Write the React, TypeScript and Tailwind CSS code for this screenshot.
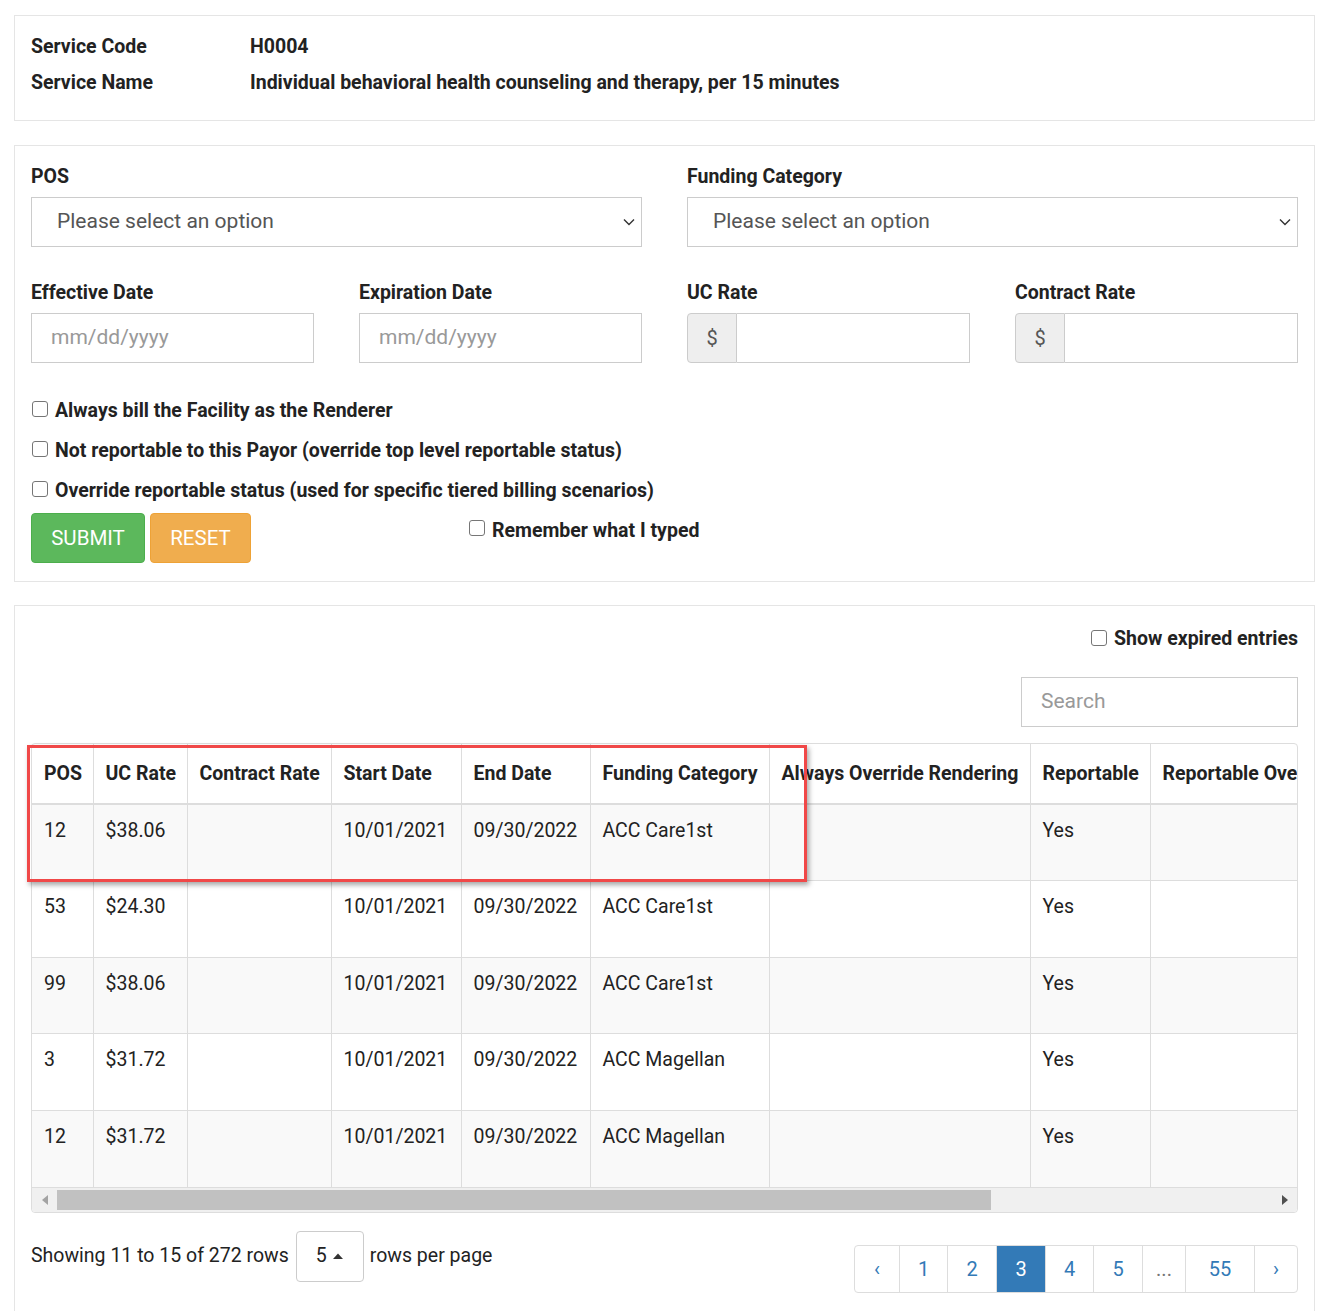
import React from "react";

const font = { fontFamily: "Roboto, 'Noto Sans', Arial, sans-serif" };

function Check({ className = "" }: { className?: string }) {
  return (
    <span
      className={
        "inline-block w-[16px] h-[16px] rounded-[3px] border border-[#767676] bg-white shrink-0 " +
        className
      }
    />
  );
}

function Chevron() {
  return (
    <svg width="14" height="10" viewBox="0 0 14 10" className="shrink-0">
      <polyline points="2,2.5 7,7.5 12,2.5" fill="none" stroke="#333" strokeWidth="1.4" />
    </svg>
  );
}

function Select() {
  return (
    <div className="h-[50px] border border-[#ccc] flex items-center pl-[25px] pr-[5px] justify-between bg-white">
      <span className="text-[21px] text-[#555]">Please select an option</span>
      <Chevron />
    </div>
  );
}

function DateInput() {
  return (
    <div className="h-[50px] border border-[#ccc] flex items-center pl-[19px] bg-white">
      <span className="text-[21px] text-[#999]">mm/dd/yyyy</span>
    </div>
  );
}

function MoneyInput() {
  return (
    <div className="h-[50px] flex">
      <div className="w-[50px] border border-[#ccc] bg-[#eee] rounded-l-[4px] flex items-center justify-center text-[20px] text-[#555]">
        $
      </div>
      <div className="flex-1 border border-l-0 border-[#ccc] bg-white" />
    </div>
  );
}

function Label({ children }: { children: React.ReactNode }) {
  return (
    <div className="text-[19.5px] font-bold leading-[22px] pt-[2px] mb-[9px] text-[#222]">{children}</div>
  );
}

const cols = [61, 94, 144, 130, 129, 179, 261, 120, 220];
const headers = [
  "POS",
  "UC Rate",
  "Contract Rate",
  "Start Date",
  "End Date",
  "Funding Category",
  "Always Override Rendering",
  "Reportable",
  "Reportable Override",
];
const rows = [
  ["12", "$38.06", "", "10/01/2021", "09/30/2022", "ACC Care1st", "", "Yes", ""],
  ["53", "$24.30", "", "10/01/2021", "09/30/2022", "ACC Care1st", "", "Yes", ""],
  ["99", "$38.06", "", "10/01/2021", "09/30/2022", "ACC Care1st", "", "Yes", ""],
  ["3", "$31.72", "", "10/01/2021", "09/30/2022", "ACC Magellan", "", "Yes", ""],
  ["12", "$31.72", "", "10/01/2021", "09/30/2022", "ACC Magellan", "", "Yes", ""],
];

export default function App() {
  return (
    <div className="w-[1335px] min-h-[1311px] bg-white text-[#222] px-[14px] pt-[15px]" style={font}>
      {/* Panel 1 */}
      <div className="w-[1301px] border border-[#e5e5e5] pl-[16px] pt-[13px] pb-[19px]">
        <div className="flex leading-[36px] text-[19.5px] font-bold">
          <div className="w-[219px]">Service Code</div>
          <div>H0004</div>
        </div>
        <div className="flex leading-[36px] text-[19.5px] font-bold">
          <div className="w-[219px]">Service Name</div>
          <div>Individual behavioral health counseling and therapy, per 15 minutes</div>
        </div>
      </div>

      {/* Panel 2 */}
      <div className="w-[1301px] border border-[#e5e5e5] mt-[24px] px-[16px] pt-[18px] pb-[18px]">
        <div className="grid grid-cols-2 gap-x-[45px]">
          <div>
            <Label>POS</Label>
            <Select />
          </div>
          <div>
            <Label>Funding Category</Label>
            <Select />
          </div>
        </div>
        <div className="grid grid-cols-4 gap-x-[45px] mt-[33px]">
          <div>
            <Label>Effective Date</Label>
            <DateInput />
          </div>
          <div>
            <Label>Expiration Date</Label>
            <DateInput />
          </div>
          <div>
            <Label>UC Rate</Label>
            <MoneyInput />
          </div>
          <div>
            <Label>Contract Rate</Label>
            <MoneyInput />
          </div>
        </div>
        <div className="mt-[28px] text-[19.5px] font-bold">
          {[
            "Always bill the Facility as the Renderer",
            "Not reportable to this Payor (override top level reportable status)",
            "Override reportable status (used for specific tiered billing scenarios)",
          ].map((t) => (
            <div key={t} className="flex items-start h-[40px] pl-[1px]">
              <Check className="mt-[10px] mr-[7px]" />
              <span className="leading-[40px]">{t}</span>
            </div>
          ))}
        </div>
        <div className="flex items-start mt-[2px]">
          <button className="h-[50px] w-[114px] rounded-[4px] bg-[#5cb85c] border border-[#4cae4c] text-white text-[20.5px]">
            SUBMIT
          </button>
          <button className="h-[50px] w-[101px] ml-[5px] rounded-[4px] bg-[#f0ad4e] border border-[#eea236] text-white text-[20.5px]">
            RESET
          </button>
          <div className="flex items-start ml-[218px] text-[19.5px] font-bold">
            <Check className="mt-[7px] mr-[7px]" />
            <span className="leading-[36px]">Remember what I typed</span>
          </div>
        </div>
      </div>

      {/* Panel 3 */}
      <div className="w-[1301px] border border-[#e5e5e5] border-b-0 mt-[23px] px-[16px] pt-[18px] pb-[40px]">
        <div className="flex justify-end items-start text-[19.5px] font-bold">
          <Check className="mt-[6px] mr-[7px]" />
          <span className="leading-[30px]">Show expired entries</span>
        </div>
        <div className="flex justify-end mt-[23px]">
          <div className="w-[277px] h-[50px] border border-[#ccc] flex items-center pl-[19px] text-[21px] text-[#999]">
            Search
          </div>
        </div>
        <div className="relative mt-[16px] border border-[#ddd] rounded-[4px]">
          <div className="overflow-hidden rounded-t-[4px]">
            <table className="border-collapse table-fixed text-[19.5px]" style={{ width: cols.reduce((a, b) => a + b, 0) }}>
              <colgroup>
                {cols.map((w, i) => (
                  <col key={i} style={{ width: w }} />
                ))}
              </colgroup>
              <thead>
                <tr>
                  {headers.map((h, i) => (
                    <th
                      key={h}
                      className={
                        "text-left font-bold px-[12px] py-[16px] h-[60px] leading-[26px] whitespace-nowrap border-b-2 border-[#ddd] " +
                        (i > 0 ? "border-l border-l-[#ddd]" : "")
                      }
                    >
                      {h}
                    </th>
                  ))}
                </tr>
              </thead>
              <tbody>
                {rows.map((r, ri) => (
                  <tr key={ri} className={ri % 2 === 0 ? "bg-[#f9f9f9]" : "bg-white"}>
                    {r.map((c, ci) => (
                      <td
                        key={ci}
                        className={
                          "align-top px-[12px] pt-[13px] h-[76.5px] leading-[26px] whitespace-nowrap border-t border-[#ddd] " +
                          (ci > 0 ? "border-l border-l-[#ddd]" : "")
                        }
                      >
                        {c}
                      </td>
                    ))}
                  </tr>
                ))}
              </tbody>
            </table>
          </div>
          {/* fake scrollbar */}
          <div className="h-[25px] bg-[#f0f0f0] border-t border-[#ddd] flex items-center rounded-b-[4px]">
            <div className="w-[25px] flex justify-center">
              <svg width="6" height="10" viewBox="0 0 6 10">
                <polygon points="6,0 0,5 6,10" fill="#a3a3a3" />
              </svg>
            </div>
            <div className="h-[20px] w-[934px] bg-[#c1c1c1]" />
            <div className="flex-1" />
            <div className="w-[25px] flex justify-center">
              <svg width="6" height="10" viewBox="0 0 6 10">
                <polygon points="0,0 6,5 0,10" fill="#505050" />
              </svg>
            </div>
          </div>
          {/* highlight annotation */}
          <div className="absolute left-[-5px] top-[1px] w-[780px] h-[137px] border-[3px] border-[#f04848] shadow-[2px_3px_5px_rgba(0,0,0,0.35)] pointer-events-none" />
        </div>

        <div className="flex justify-between items-start mt-[18px]">
          <div className="flex items-center text-[19.5px] text-[#222]">
            <span>Showing 11 to 15 of 272 rows</span>
            <div className="ml-[7px] w-[68px] h-[51px] border border-[#ccc] rounded-[4px] flex items-center justify-center">
              <span>5</span>
              <svg width="12" height="8" viewBox="0 0 12 8" className="ml-[5px]">
                <polygon points="1,7 6,1.5 11,7" fill="#333" />
              </svg>
            </div>
            <span className="ml-[6px]">rows per page</span>
          </div>
          <div className="mt-[14px] flex h-[48px] border border-[#ddd] rounded-[4px] text-[20px] text-[#337ab7] overflow-hidden">
            {[
              ["‹", 44],
              ["1", 48],
              ["2", 49],
              ["3", 49],
              ["4", 48],
              ["5", 49],
              ["...", 43],
              ["55", 69],
              ["›", 43],
            ].map(([t, w], i) => (
              <div
                key={i}
                style={{ width: w as number }}
                className={
                  "flex items-center justify-center " +
                  (i > 0 ? "border-l border-[#ddd] " : "") +
                  (t === "3" ? "bg-[#337ab7] text-white border-[#337ab7] " : "") +
                  (t === "..." ? "text-[#777] " : "")
                }
              >
                {t}
              </div>
            ))}
          </div>
        </div>
      </div>
    </div>
  );
}
